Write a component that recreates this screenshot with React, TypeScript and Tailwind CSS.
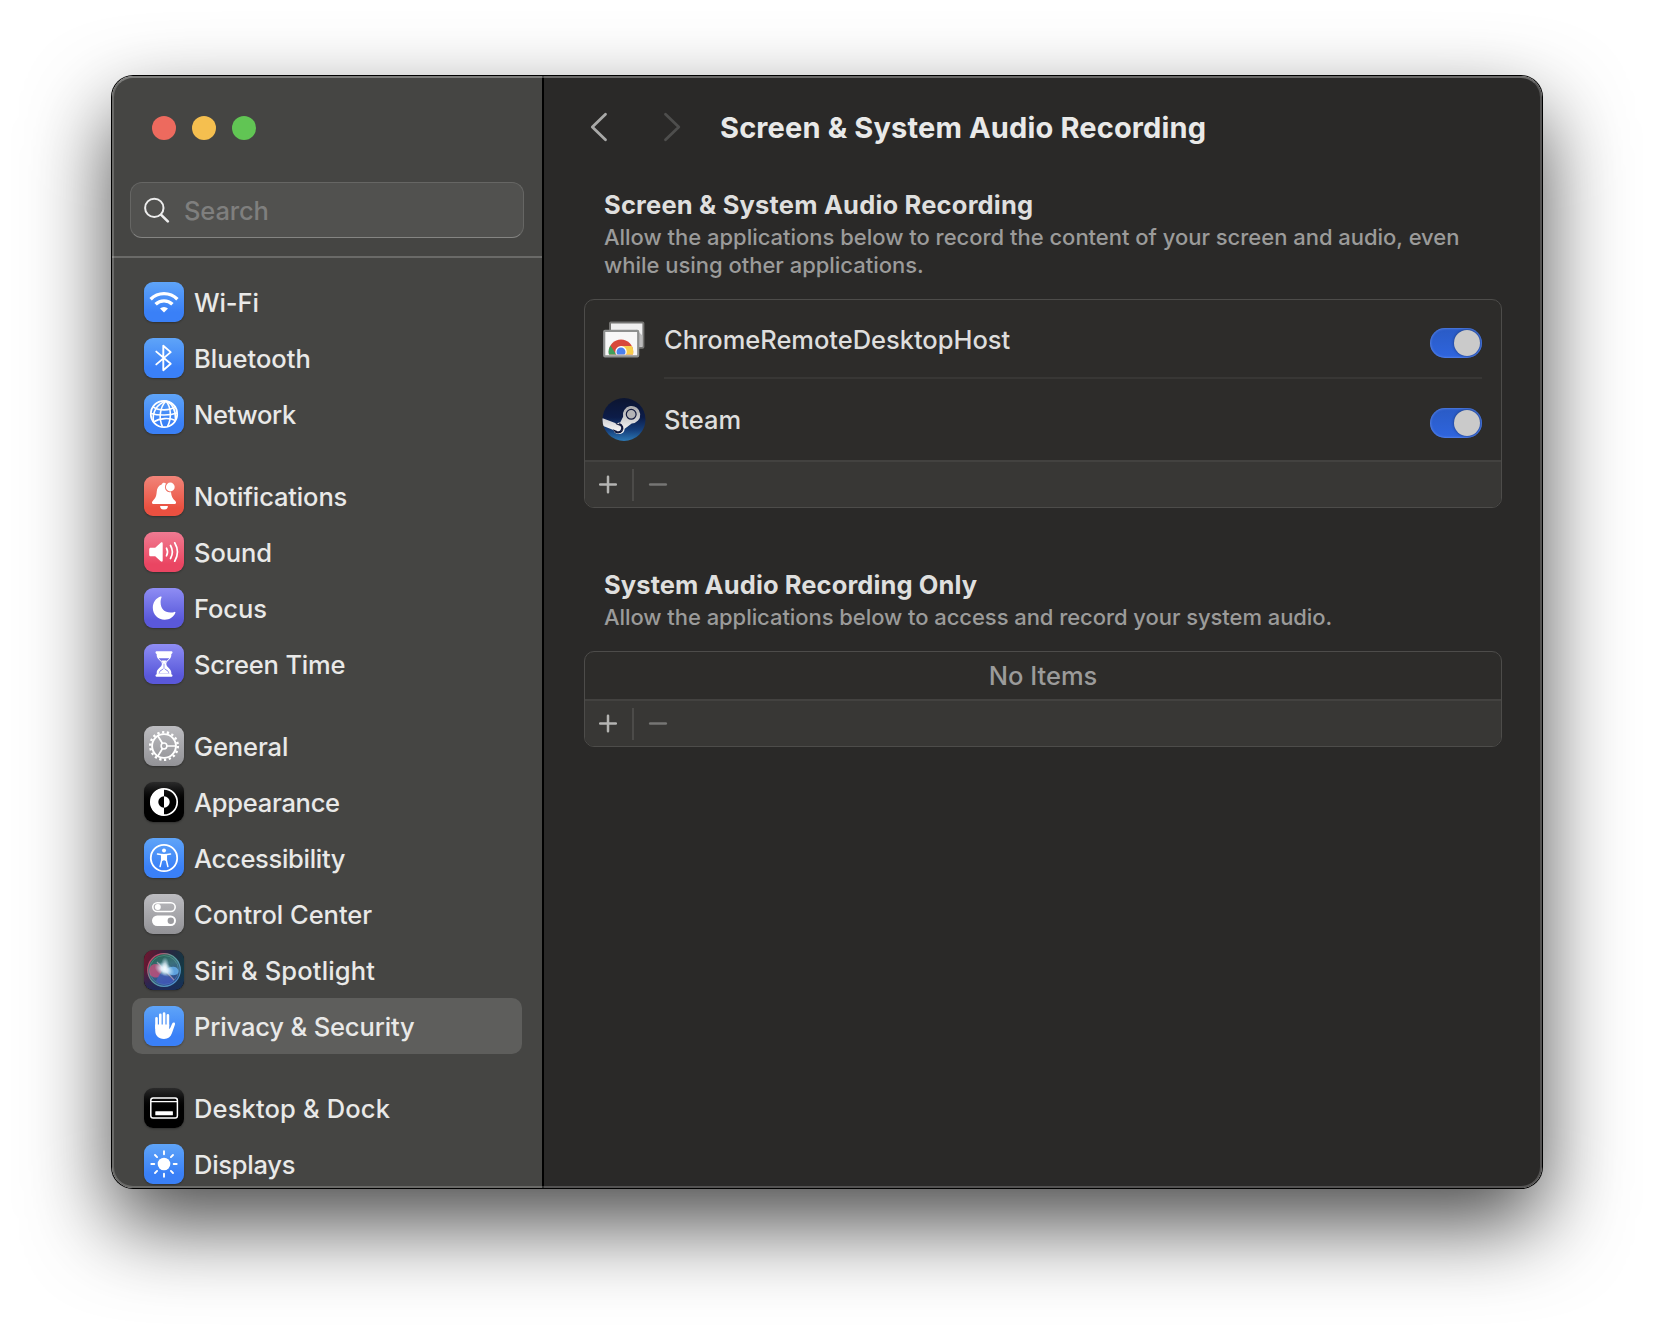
import React from "react";

type Row = { label: string; icon: React.ReactNode; bg: string; sp: string; selected?: boolean };

const BLUE = "bg-linear-to-b from-[#5fa4f8] to-[#3a80f7] to-75%";
const GRAY = "bg-linear-to-b from-[#bcbcc0] to-[#929296]";
const BLACK = "bg-linear-to-b from-[#2b2b2b] to-[#000000] to-60%";
const INDIGO = "bg-linear-to-b from-[#8f8df4] to-[#5a58da] to-80%";
const RED = "bg-linear-to-b from-[#f18479] to-[#ea5040] to-80%";
const PINK = "bg-linear-to-b from-[#f07a92] to-[#ea4562] to-80%";

function Glyph({ children }: { children: React.ReactNode }) {
  return (
    <svg viewBox="0 0 40 40" className="size-10" fill="none" stroke="none">
      {children}
    </svg>
  );
}

const wifi = (
  <Glyph>
    <g stroke="#fff" strokeWidth="3.4">
      <path d="M6.600 17.200a19 19 0 0 1 26.800 0" />
      <path d="M11.600 22.300a11.900 11.900 0 0 1 16.800 0" />
    </g>
    <path d="M20 30.600l-4-4.100a5.800 5.800 0 0 1 8 0z" fill="#fff" />
  </Glyph>
);

const bluetooth = (
  <Glyph>
    <path d="M12.300 13.600l14.400 12.200-7.400 6.400V7.800l7.400 6.300-14.400 12.300" stroke="#fff" strokeWidth="1.900" strokeLinejoin="round" strokeLinecap="round" />
  </Glyph>
);

const network = (
  <Glyph>
    <g stroke="#fff" strokeWidth="1.600">
      <circle cx="20" cy="20" r="13.200" strokeWidth="1.800" />
      <path d="M22 7c-6 6-7.600 17-3.500 25.800" />
      <path d="M22 7c-9 3-14 11-12.500 20.500" />
      <path d="M22 7c5 6 6 17 1.500 25.500" />
      <path d="M22 7c6.500 3 10 9 9.500 18.500" />
      <path d="M9 12.800c6 4.200 16 4.200 23-.3" />
      <path d="M7 19.500c8 2.300 19 2 26-.5" />
      <path d="M9.500 28c6-4 16-4.500 22-1.500" />
    </g>
  </Glyph>
);

const bell = (
  <Glyph>
    <path d="M20 6.800c.9 0 1.600.3 2 .9-1.900 2.500-1.300 7 2.600 8.400.9.300 1.700.3 2.400.2.400 4 1.500 6.300 4.300 8.700 1.300 1.300.9 3-.8 3H9.500c-1.700 0-2.100-1.700-.8-3 3.200-3 3.600-5.200 4-9.200.3-3.700 1.700-6.300 5-7.400.3-1 1.200-1.600 2.300-1.600z" fill="#fff" />
    <circle cx="26.300" cy="11" r="4.400" fill="#fff" />
    <path d="M16.100 30h7.800a3.900 3.500 0 0 1-7.800 0z" fill="#fff" />
  </Glyph>
);

const sound = (
  <Glyph>
    <path d="M5.200 17.300c0-1 .6-1.600 1.600-1.600h4.400l5.500-5c1-.9 2-.5 2 .7v17.200c0 1.200-1 1.600-2 .7l-5.500-5H6.800c-1 0-1.600-.6-1.600-1.600z" fill="#fff" />
    <g stroke="#fff" strokeWidth="1.700" strokeLinecap="round">
      <path d="M22.500 16.200c1.300 2.400 1.300 5.200 0 7.600" />
      <path d="M26.500 13.500c2.300 4 2.300 9 0 13" />
      <path d="M30.700 10.800c3.400 5.700 3.400 12.700 0 18.400" />
    </g>
  </Glyph>
);

const moon = (
  <Glyph>
    <path d="M16.500 8.600c-4.600 1.600-7.700 6-7.700 11.100 0 6.700 5.200 12 11.900 12 4.900 0 9.100-2.800 10.700-7 .2-.7-.2-1-.9-.8-1.100.4-2.500.6-3.900.6-6.300 0-10-4-10-10.300 0-1.700.3-3.500.9-4.700.3-.7-.2-1.200-1-.9z" fill="#fff" />
  </Glyph>
);

const hourglass = (
  <Glyph>
    <path d="M13 7.300h14c1 0 1.500.5 1.500 1.300 0 .7-.4 1.200-1.200 1.300v1.600c0 3.800-5 5.300-5 8.500s5 4.600 5 8.500v1.700c.8.100 1.200.6 1.200 1.300 0 .8-.5 1.300-1.500 1.300H13c-1 0-1.500-.5-1.500-1.300 0-.7.400-1.200 1.200-1.300v-1.700c0-3.900 5.200-5.300 5.200-8.500s-5.200-4.700-5.200-8.500V9.900c-.8-.1-1.200-.6-1.200-1.300 0-.8.500-1.300 1.500-1.300z" fill="#fff" />
    <path d="M14.800 14.200h10.400c-.9 1.900-4.400 3-4.400 6.600v3.600c1.800 1.300 4.400 2.400 4.600 5.200H14.600c.2-2.800 2.800-3.900 4.600-5.200v-3.600c0-3.600-3.500-4.700-4.400-6.600z" fill="#6e6ce4" />
    <path d="M17.400 16.500h5.200L20.600 20v5c1.500 1.300 3.800 2.300 4.300 4.600h-9.800c.5-2.300 2.800-3.300 4.300-4.600v-5z" fill="#fff" />
  </Glyph>
);

const gear = (
  <Glyph>
    <circle cx="20" cy="20" r="11.900" stroke="#fff" strokeWidth="1.900" />
    <circle cx="20" cy="20" r="13.800" stroke="#fff" strokeWidth="2.400" strokeDasharray="2.300 2.516" />
    <circle cx="20" cy="20" r="2.900" stroke="#fff" strokeWidth="1.500" />
    <path d="M22.900 20H32M18.500 17.500l-5-8.300M18.500 22.500l-5 8.300" stroke="#fff" strokeWidth="1.700" />
  </Glyph>
);

const appearance = (
  <Glyph>
    <circle cx="20" cy="20" r="13.200" stroke="#fff" strokeWidth="1.700" />
    <path d="M20 6.500a13.500 13.500 0 0 0 0 27v-7.800a5.700 5.700 0 0 1 0-11.400z" fill="#fff" />
    <path d="M20 14.300a5.700 5.700 0 0 1 0 11.400z" fill="#fff" />
  </Glyph>
);

const accessibility = (
  <Glyph>
    <circle cx="20" cy="20" r="13.200" stroke="#fff" strokeWidth="1.800" />
    <circle cx="20" cy="12.600" r="2" fill="#fff" />
    <path d="M13.500 16.100c4.200.9 8.800.9 13 0" stroke="#fff" strokeWidth="1.500" strokeLinecap="round" />
    <path d="M22.300 17v5l1.600 6.600M17.700 17v5l-1.600 6.600M18 22.300l2-1 2 1" stroke="#fff" strokeWidth="1.500" strokeLinecap="round" />
    <path d="M17.300 16.500h5.400v5.600h-5.400z" fill="#fff" />
  </Glyph>
);

const control = (
  <Glyph>
    <rect x="8.800" y="8.700" width="22.400" height="8.800" rx="4.400" stroke="#fff" strokeWidth="1.600" />
    <circle cx="13.800" cy="13.100" r="3" fill="#fff" />
    <rect x="8" y="21.500" width="24" height="10.400" rx="5.200" fill="#fff" />
    <circle cx="26.800" cy="26.700" r="3.200" fill="#9b9b9f" />
  </Glyph>
);

const siri = (
  <Glyph>
    <defs>
      <linearGradient id="siri-bg" x1="0" y1="0.2" x2="1" y2="0.5">
        <stop offset="0" stopColor="#6d1730" />
        <stop offset="0.5" stopColor="#2b2540" />
        <stop offset="1" stopColor="#123a44" />
      </linearGradient>
      <linearGradient id="siri-low" x1="0" y1="0" x2="0" y2="1">
        <stop offset="0.5" stopColor="#1d2c66" stopOpacity="0" />
        <stop offset="1" stopColor="#1b2a5c" stopOpacity="0.85" />
      </linearGradient>
      <linearGradient id="siri-ring" x1="0.1" y1="0.3" x2="0.8" y2="0.9">
        <stop offset="0" stopColor="#c04a6c" />
        <stop offset="0.35" stopColor="#5f9c94" />
        <stop offset="1" stopColor="#4f92c8" />
      </linearGradient>
      <linearGradient id="siri-orb" x1="0.3" y1="0" x2="0.7" y2="1">
        <stop offset="0" stopColor="#26604f" />
        <stop offset="0.4" stopColor="#3a6f7c" />
        <stop offset="1" stopColor="#2a3f96" />
      </linearGradient>
      <radialGradient id="siri-glow">
        <stop offset="0" stopColor="#fff" />
        <stop offset="0.35" stopColor="#e8f6ff" stopOpacity="0.9" />
        <stop offset="1" stopColor="#bfe6f5" stopOpacity="0" />
      </radialGradient>
    </defs>
    <rect width="40" height="40" rx="9" fill="url(#siri-bg)" />
    <rect width="40" height="40" rx="9" fill="url(#siri-low)" />
    <circle cx="20" cy="20" r="16.300" fill="url(#siri-orb)" stroke="url(#siri-ring)" strokeWidth="1.200" />
    <circle cx="20" cy="20" r="14.500" stroke="#7fd0b4" strokeOpacity="0.4" strokeWidth="0.800" />
    <path d="M19 19c-3-6-12-7-13.500 0s5 10 9 8z" fill="#d8487a" fillOpacity="0.7" />
    <path d="M21 21c4-6 13-5 13.500 0s-8 6-13.500 0z" fill="#6ab4f4" fillOpacity="0.8" />
    <path d="M15 25c4-4 10 1 15 6-6 6-15 4-18 0z" fill="#4a5fc8" fillOpacity="0.6" />
    <path d="M13 12l17 18" stroke="#f7c6da" strokeOpacity="0.5" strokeWidth="1.200" />
    <ellipse cx="20.500" cy="19.500" rx="10.500" ry="6.500" fill="url(#siri-glow)" transform="rotate(25 20.500 19.500)" />
    <ellipse cx="21" cy="16.500" rx="4.500" ry="9.500" fill="url(#siri-glow)" opacity="0.75" />
  </Glyph>
);

const hand = (
  <Glyph>
    <g stroke="#fff" strokeWidth="2.600" strokeLinecap="round">
      <path d="M12.500 22V12.200M16.300 20V8.700M20.100 20V7.500M23.900 20V9.400" />
    </g>
    <path d="M11.200 18.500h14v4.300c.4.300.7 0 1-.7l1.900-4.300c.5-1.100 1.300-1.500 2.100-1.200.8.300 1 1.100.7 2.100l-3 8.600c-1.300 3.700-3.800 5.600-7.900 5.600-5.700 0-8.800-3.300-8.800-8.700z" fill="#fff" />
  </Glyph>
);

const dock = (
  <Glyph>
    <rect x="6.800" y="10.100" width="26.600" height="20" rx="2.300" stroke="#fff" strokeWidth="1.500" />
    <path d="M7 13.600h26" stroke="#fff" strokeWidth="1.200" />
    <rect x="11.300" y="23.300" width="17.600" height="3.900" rx="0.500" fill="#fff" />
  </Glyph>
);

const sun = (
  <Glyph>
    <circle cx="20" cy="20" r="6.300" fill="#fff" />
    <path d="M20 7.300v3M20 29.700v3M7.300 20h3M29.700 20h3M11 11l2.100 2.100M26.900 26.900L29 29M11 29l2.100-2.100M26.900 13.100L29 11" stroke="#fff" strokeWidth="1.900" strokeLinecap="round" />
  </Glyph>
);

const groups: Row[][] = [
  [
    { label: "Wi-Fi", icon: wifi, bg: BLUE, sp: "tracking-[-0.1px]" },
    { label: "Bluetooth", icon: bluetooth, bg: BLUE, sp: "tracking-[0px]" },
    { label: "Network", icon: network, bg: BLUE, sp: "tracking-[-0.28px]" },
  ],
  [
    { label: "Notifications", icon: bell, bg: RED, sp: "tracking-[-0.14px]" },
    { label: "Sound", icon: sound, bg: PINK, sp: "tracking-[-0.05px]" },
    { label: "Focus", icon: moon, bg: INDIGO, sp: "tracking-[-0.1px]" },
    { label: "Screen Time", icon: hourglass, bg: INDIGO, sp: "tracking-[-0.18px]" },
  ],
  [
    { label: "General", icon: gear, bg: GRAY, sp: "tracking-[-0.1px]" },
    { label: "Appearance", icon: appearance, bg: BLACK, sp: "tracking-[-0.28px]" },
    { label: "Accessibility", icon: accessibility, bg: BLUE, sp: "tracking-[-0.3px]" },
    { label: "Control Center", icon: control, bg: GRAY, sp: "tracking-[-0.02px]" },
    { label: "Siri & Spotlight", icon: siri, bg: BLACK, sp: "tracking-[0.14px]" },
    { label: "Privacy & Security", icon: hand, bg: BLUE, sp: "tracking-[-0.14px]", selected: true },
  ],
  [
    { label: "Desktop & Dock", icon: dock, bg: BLACK, sp: "tracking-[0.15px]" },
    { label: "Displays", icon: sun, bg: BLUE, sp: "tracking-[-0.25px]" },
  ],
];

function Sidebar() {
  return (
    <aside className="flex w-[430px] shrink-0 flex-col bg-[#454543]">
      <div className="flex h-[106px] shrink-0 gap-4 pt-10 pl-10">
        <span className="size-6 rounded-full bg-[#ed6a5e]" />
        <span className="size-6 rounded-full bg-[#f5bf4f]" />
        <span className="size-6 rounded-full bg-[#61c554]" />
      </div>
      <div className="mx-[18px] flex h-14 shrink-0 items-center rounded-xl border border-[#666664] border-b-[#858583] bg-[#51514f] pl-[13px]">
        <svg viewBox="0 0 26 26" className="size-[26px]" fill="none" stroke="#ededed" strokeLinecap="round">
          <circle cx="10.300" cy="10.900" r="9.200" strokeWidth="2" />
          <path d="M17.200 17.800l6.600 6.600" strokeWidth="2.600" />
        </svg>
        <span className="pt-0.5 pl-[14px] text-[25.5px] leading-[30px] tracking-[-0.15px] text-[#7f7f7e]">Search</span>
      </div>
      <div className="mt-[18px] h-0.5 shrink-0 bg-[#6a6a68]" />
      <nav className="flex min-h-0 grow flex-col gap-[26px] overflow-hidden px-5 pt-4">
        {groups.map((rows, i) => (
          <div key={i} className="flex flex-col">
            {rows.map((r) => (
              <div key={r.label} className={`flex h-14 shrink-0 items-center gap-2.5 rounded-[10px] pl-3 ${r.selected ? "bg-[#5e5e5c]" : ""}`}>
                <span className={`size-10 shrink-0 overflow-hidden rounded-[9px] shadow-[0_1px_2px_rgba(0,0,0,0.3)] ${r.bg}`}>{r.icon}</span>
                <span className={`pt-0.5 text-[25.5px] leading-[30px] whitespace-nowrap text-[#e9e9e8] ${r.sp}`}>{r.label}</span>
              </div>
            ))}
          </div>
        ))}
      </nav>
    </aside>
  );
}

function Toggle() {
  return (
    <span className="flex h-[30px] w-[52px] items-center justify-end rounded-full bg-linear-to-b from-[#2a5bc5] to-[#2f65de] pr-0.5 shadow-[inset_0_0_2px_1px_rgba(110,150,240,0.55)]">
      <span className="size-[26px] rounded-full bg-[#cacaca] shadow-[0_0_3px_rgba(0,0,0,0.45)]" />
    </span>
  );
}

function ChromeRemote() {
  return (
    <svg viewBox="0 0 44 44" className="size-11" fill="none">
      <defs>
        <clipPath id="crd-clip"><path d="M3 14h32v23.500H3z" /></clipPath>
      </defs>
      <rect x="8" y="5.500" width="33.400" height="25.200" rx="0.800" fill="#efefef" stroke="#747472" strokeWidth="2" />
      <path d="M34 12.500l6.400 6v11.200H34z" fill="#bcbcbc" />
      <rect x="2.200" y="13.900" width="34" height="25.500" rx="0.800" fill="#f7f7f7" stroke="#8e908f" strokeWidth="2.200" />
      <g clipPath="url(#crd-clip)">
        <circle cx="19" cy="34.700" r="12.200" fill="#d8493a" />
        <path d="M19 29.100h10.900a12.200 12.200 0 0 1-3 15L19 40z" fill="#f6cd4c" />
        <path d="M8.400 28.600a12.200 12.200 0 0 0 .5 13.100L19 40l-4.800-2.600z" fill="#3f9f5b" />
        <circle cx="19" cy="34.700" r="5.700" fill="#fff" />
        <circle cx="19" cy="34.900" r="4.500" fill="#4a80ee" />
      </g>
    </svg>
  );
}

function Steam() {
  return (
    <svg viewBox="0 0 44 44" className="size-11">
      <defs>
        <linearGradient id="steam-bg" x1="0" y1="0" x2="0" y2="1">
          <stop offset="0" stopColor="#0c1530" />
          <stop offset="0.45" stopColor="#0c1c48" />
          <stop offset="0.75" stopColor="#16407c" />
          <stop offset="1" stopColor="#2c78b4" />
        </linearGradient>
        <linearGradient id="steam-arm" x1="0" y1="0" x2="0" y2="1">
          <stop offset="0" stopColor="#a9a9ab" />
          <stop offset="1" stopColor="#ffffff" />
        </linearGradient>
        <clipPath id="steam-clip"><circle cx="22" cy="21.500" r="21.500" /></clipPath>
      </defs>
      <circle cx="22" cy="21.500" r="21.500" fill="url(#steam-bg)" />
      <g clipPath="url(#steam-clip)">
        <path d="M0 20l14.500 5.500c1.200-.8 2.500-1.100 3.700-1.100l2.900-5.600a8.700 8.700 0 1 1 8.600 6.600l-7 5.300a5.800 5.800 0 0 1-11.300 1.200L0 27.500z" fill="url(#steam-arm)" />
        <circle cx="29.200" cy="16.300" r="4.900" fill="#b4b4b6" stroke="#10183c" strokeWidth="1.200" />
        <path d="M13.800 25.600l3.600 1.400a3.400 3.400 0 0 1-2.400 6.500l-3-1.200a4.700 4.700 0 1 0 5.200-6.700" fill="none" stroke="#10183c" strokeWidth="1.100" />
      </g>
    </svg>
  );
}

function Footer() {
  return (
    <div className="flex h-[47px] items-center border-t-2 border-[#434240] bg-[#383735]">
      <svg viewBox="0 0 20 20" className="ml-[13px] size-5" stroke="#b4b4b2" strokeWidth="2.500" strokeLinecap="round">
        <path d="M2.200 9.500h15.600M10 1.700v15.600" />
      </svg>
      <span className="ml-[14px] h-8 w-0.5 bg-[#4c4b49]" />
      <svg viewBox="0 0 20 20" className="ml-[14px] size-5" stroke="#767674" strokeWidth="2.600" strokeLinecap="round">
        <path d="M2.200 9.500h15.600" />
      </svg>
    </div>
  );
}

function Heading({ children, sp }: { children: React.ReactNode; sp: string }) {
  return <h2 className={`text-[25.5px] leading-[32px] font-bold whitespace-nowrap text-[#dfdfde] ${sp}`}>{children}</h2>;
}

function Main() {
  return (
    <main className="flex grow flex-col border-l-2 border-black bg-[#2a2928] px-10">
      <header className="flex h-[102px] items-center">
        <svg viewBox="0 0 30 30" className="size-[30px]" fill="none" stroke="#a9a9a8" strokeWidth="2.800" strokeLinecap="round" strokeLinejoin="round">
          <path d="M21.500 2.300L8.300 15l13.200 12.700" />
        </svg>
        <svg viewBox="0 0 30 30" className="ml-[42px] size-[30px]" fill="none" stroke="#4e4e4d" strokeWidth="2.800" strokeLinecap="round" strokeLinejoin="round">
          <path d="M9.500 2.300L22.800 15 9.500 27.700" />
        </svg>
        <h1 className="ml-[34px] pt-0.5 text-[29px] leading-9 font-bold tracking-[0.15px] whitespace-nowrap text-[#e9e9e8]">Screen &amp; System Audio Recording</h1>
      </header>

      <section className="pt-[11px]">
        <div className="pl-5">
          <Heading sp="tracking-[0.19px]">Screen &amp; System Audio Recording</Heading>
          <p className="pt-0.5 text-[22px] leading-7 tracking-[-0.02px] whitespace-nowrap text-[#9b9b9a]">
            <span>Allow the applications below to record the content of your screen and audio, even</span>
            <br />
            <span>while using other applications.</span>
          </p>
        </div>
        <div className="mt-5 overflow-hidden rounded-[10px] border border-[#4d4c4a] bg-[#2d2c2a]">
          <div className="flex h-[77px] items-center pr-[19px] pl-[17px]">
            <ChromeRemote />
            <span className="ml-[18px] grow pt-[3px] text-[25.5px] leading-[30px] tracking-[-0.03px] text-[#dededd]">ChromeRemoteDesktopHost</span>
            <span className="pt-[9px]"><Toggle /></span>
          </div>
          <div className="mr-[19px] ml-[79px] h-0.5 bg-[#383735]" />
          <div className="flex h-[81px] items-center pr-[19px] pl-[17px]">
            <Steam />
            <span className="ml-[18px] grow pt-px text-[25.5px] leading-[30px] tracking-[-0.05px] text-[#dededd]">Steam</span>
            <span className="pt-[7px]"><Toggle /></span>
          </div>
          <Footer />
        </div>
      </section>

      <section className="pt-[61px]">
        <div className="pl-5">
          <Heading sp="tracking-[0.1px]">System Audio Recording Only</Heading>
          <p className="pt-0.5 text-[22px] leading-7 tracking-[-0.06px] whitespace-nowrap text-[#9b9b9a]">
            <span>Allow the applications below to access and record your system audio.</span>
          </p>
        </div>
        <div className="mt-5 overflow-hidden rounded-[10px] border border-[#4d4c4a] bg-[#2d2c2a]">
          <div className="flex h-[47px] items-center justify-center pt-px text-[25.5px] leading-[30px] text-[#9b9b9a]">No Items</div>
          <Footer />
        </div>
      </section>
    </main>
  );
}

export default function App() {
  return (
    <div className="h-[1336px] w-[1654px] overflow-hidden bg-white pt-[76px] pl-[112px] font-['Inter',sans-serif] font-[450]">
      <div className="relative h-[1112px] w-[1430px] rounded-[21px] shadow-[0_0_0_1px_#000,0_36px_84px_rgba(0,0,0,0.71)]">
        <div className="flex size-full overflow-hidden rounded-[21px]">
          <Sidebar />
          <Main />
        </div>
        <div className="pointer-events-none absolute inset-0 rounded-[21px] border-2 border-white/20 border-t-white/30" />
      </div>
    </div>
  );
}
